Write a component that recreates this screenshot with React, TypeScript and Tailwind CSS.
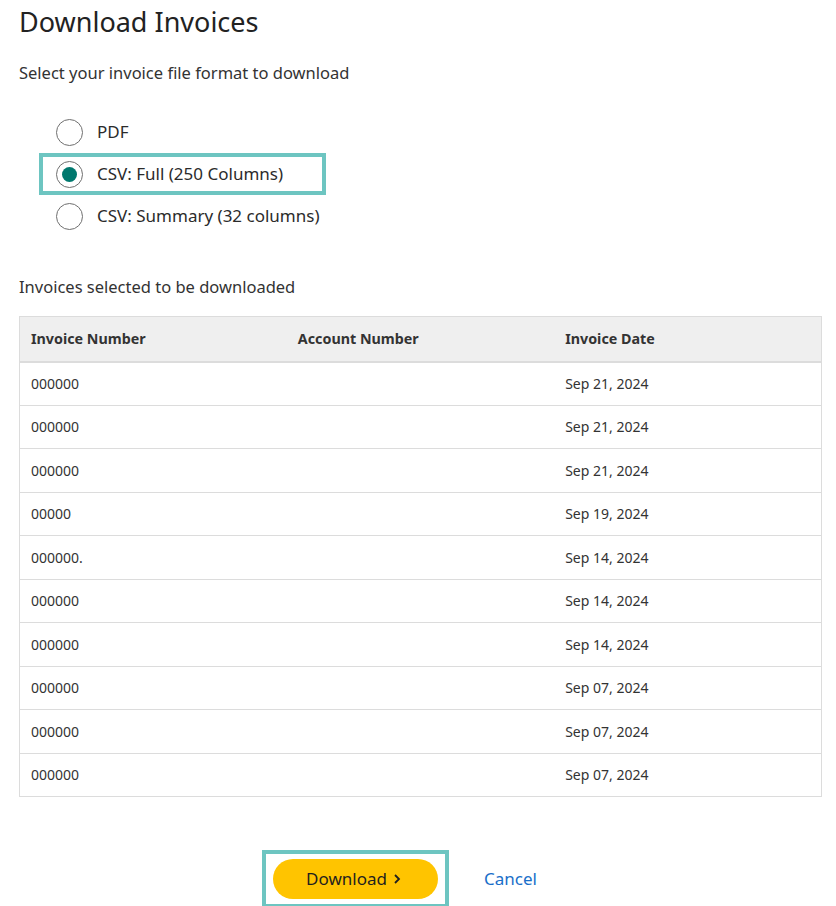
import React from "react";

const rows: [string, string][] = [
  ["000000", "Sep 21, 2024"],
  ["000000", "Sep 21, 2024"],
  ["000000", "Sep 21, 2024"],
  ["00000", "Sep 19, 2024"],
  ["000000.", "Sep 14, 2024"],
  ["000000", "Sep 14, 2024"],
  ["000000", "Sep 14, 2024"],
  ["000000", "Sep 07, 2024"],
  ["000000", "Sep 07, 2024"],
  ["000000", "Sep 07, 2024"],
];

function Radio({ checked }: { checked?: boolean }) {
  return (
    <span className="flex h-[27px] w-[27px] shrink-0 items-center justify-center rounded-full border border-[#6f6f6f] bg-white">
      {checked && <span className="h-[15px] w-[15px] rounded-full bg-[#00786e]" />}
    </span>
  );
}

export default function App() {
  return (
    <div className="min-h-[906px] w-[836px] bg-white pl-[19px] pr-[14px] pt-[4px] text-[#2b2b2b]" style={{ fontFamily: '"Noto Sans", "Open Sans", sans-serif' }}>
      <h1 className="text-[27px] leading-[36px] text-[#222]">Download Invoices</h1>
      <p className="mt-[21px] text-[16.5px] leading-[24px] text-[#333]">Select your invoice file format to download</p>

      <div className="mt-[26px] flex flex-col">
        <label className="ml-[37px] flex h-[42px] items-center gap-[14px]">
          <Radio />
          <span className="text-[17px]">PDF</span>
        </label>
        <label className="ml-[20px] flex h-[42px] w-[287px] items-center gap-[14px] border-[4px] border-[#6dc5c1] pl-[13px]">
          <Radio checked />
          <span className="text-[17px]">CSV: Full (250 Columns)</span>
        </label>
        <label className="ml-[37px] flex h-[42px] items-center gap-[14px]">
          <Radio />
          <span className="text-[17px]">CSV: Summary (32 columns)</span>
        </label>
      </div>

      <p className="mt-[38px] text-[16.5px] leading-[24px] text-[#333]">Invoices selected to be downloaded</p>

      <table className="mt-[17px] w-[803px] table-fixed border-collapse border border-[#dcdcdc] text-left">
        <thead>
          <tr className="h-[45px] border-b-2 border-[#dcdcdc] bg-[#efefef]">
            <th className="pl-[11px] text-[14.3px] font-bold text-[#333]">Invoice Number</th>
            <th className="pl-[11px] text-[14.3px] font-bold text-[#333]">Account Number</th>
            <th className="pl-[11px] text-[14.3px] font-bold text-[#333]">Invoice Date</th>
          </tr>
        </thead>
        <tbody>
          {rows.map((r, i) => (
            <tr key={i} className="h-[43.5px] border-b border-[#dcdcdc]">
              <td className="pl-[11px] text-[14px] text-[#333]">{r[0]}</td>
              <td className="pl-[11px] text-[14px] text-[#333]"></td>
              <td className="pl-[11px] text-[14px] text-[#333]">{r[1]}</td>
            </tr>
          ))}
        </tbody>
      </table>

      <div className="mt-[53px] flex items-center">
        <div className="ml-[243px] flex h-[58px] w-[187px] items-center justify-center border-[4px] border-[#6dc5c1]">
          <button className="flex h-[40px] w-[165px] items-center justify-center gap-[6px] rounded-full bg-[#ffc400] pr-[4px] text-[17px] text-[#1f1f1f]">
            Download
            <svg width="8" height="12" viewBox="0 0 8 12" fill="none" stroke="#1f1f1f" strokeWidth="1.8"><path d="M2 2l4 4-4 4" /></svg>
          </button>
        </div>
        <a className="ml-[35px] text-[17px] text-[#1a6fc9]">Cancel</a>
      </div>
    </div>
  );
}
